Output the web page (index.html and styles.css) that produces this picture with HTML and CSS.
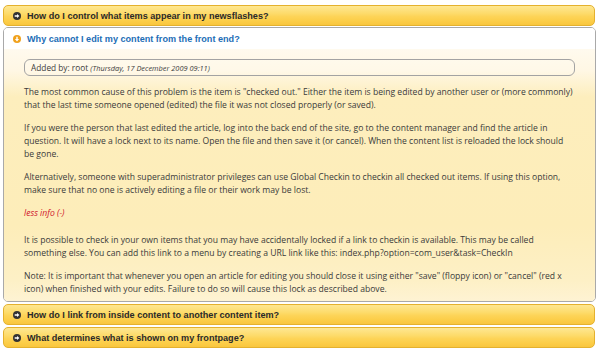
FILE: index.html
```html
<!DOCTYPE html>
<html>
<head>
<meta charset="utf-8">
<link rel="stylesheet" href="styles.css">
</head>
<body>
<div class="faq">
  <div class="bar">
    <svg class="ico" viewBox="0 0 8 8"><circle cx="4" cy="4" r="4" fill="#333"/><path d="M1.7 3.3H4V1.9L6.4 4 4 6.1V4.7H1.7Z" fill="#fff"/></svg>
    <span>How do I control what items appear in my newsflashes?</span>
  </div>
  <div class="panel">
    <div class="head">
      <svg class="ico" viewBox="0 0 8 8"><circle cx="4" cy="4" r="4" fill="#f0a11c"/><path d="M3.3 1.7H4.7V4H6.1L4 6.4 1.9 4H3.3Z" fill="#fff"/></svg>
      <span>Why cannot I edit my content from the front end?</span>
    </div>
    <div class="body">
      <div class="meta">Added by: root <em>(Thursday, 17 December 2009 09:11)</em></div>
      <p>The most common cause of this problem is the item is "checked out." Either the item is being edited by another user or (more commonly)<br>that the last time someone opened (edited) the file it was not closed properly (or saved).</p>
      <p>If you were the person that last edited the article, log into the back end of the site, go to the content manager and find the article in<br>question. It will have a lock next to its name. Open the file and then save it (or cancel). When the content list is reloaded the lock should<br>be gone.</p>
      <p>Alternatively, someone with superadministrator privileges can use Global Checkin to checkin all checked out items. If using this option,<br>make sure that no one is actively editing a file or their work may be lost.</p>
      <p class="less">less info (-)</p>
      <p>It is possible to check in your own items that you may have accidentally locked if a link to checkin is available. This may be called<br>something else. You can add this link to a menu by creating a URL link like this: index.php?option=com_user&amp;task=CheckIn</p>
      <p>Note: It is important that whenever you open an article for editing you should close it using either "save" (floppy icon) or "cancel" (red x<br>icon) when finished with your edits. Failure to do so will cause this lock as described above.</p>
    </div>
  </div>
  <div class="bar">
    <svg class="ico" viewBox="0 0 8 8"><circle cx="4" cy="4" r="4" fill="#333"/><path d="M1.7 3.3H4V1.9L6.4 4 4 6.1V4.7H1.7Z" fill="#fff"/></svg>
    <span>How do I link from inside content to another content item?</span>
  </div>
  <div class="bar">
    <svg class="ico" viewBox="0 0 8 8"><circle cx="4" cy="4" r="4" fill="#333"/><path d="M1.7 3.3H4V1.9L6.4 4 4 6.1V4.7H1.7Z" fill="#fff"/></svg>
    <span>What determines what is shown on my frontpage?</span>
  </div>
</div>
</body>
</html>
```
FILE: styles.css
```css
html, body {
  margin: 0;
  padding: 0;
  background: #fff;
}
.faq {
  display: flex;
  flex-direction: column;
  gap: 2px;
  width: 593px;
  margin: 5px 0 0 3px;
}
.bar, .head {
  display: flex;
  align-items: center;
  gap: 6px;
  padding-left: 6px;
  font-family: "Liberation Sans", Arial, sans-serif;
  font-weight: bold;
  font-size: 9.1px;
}
.bar {
  box-sizing: border-box;
  height: 21px;
  width: 592px;
  border: 1px solid #e4b12e;
  border-radius: 5px;
  color: #2a2a2a;
  background: linear-gradient(to bottom, #fee792 0%, #fddb6a 40%, #fdd458 55%, #fccd47 80%, #f9c63e 100%);
}
.ico {
  width: 8px;
  height: 8px;
  flex: none;
  margin-left: 3px;
}
.panel {
  margin-top: -1px;
  border: 1px solid #a9a9a9;
  border-radius: 5px;
  overflow: hidden;
  background: #fff;
}
.head {
  height: 21px;
  color: #1c6db6;
  background: #fff;
}
.body {
  padding: 10px 20px 5px 20px;
  background: linear-gradient(to bottom, #fffaee 0px, #fff7e4 22px, #fdeebd 48px, #fdedb9 70%, #fdf0c6 92%, #fef3d3 100%);
  font-family: "Open Sans", "Liberation Sans", sans-serif;
  font-size: 8.6px;
  line-height: 13px;
  color: #3a3a3a;
}
.meta {
  box-sizing: border-box;
  height: 17px;
  line-height: 15px;
  border: 1px solid #a3a3a3;
  border-radius: 6px;
  padding-left: 6px;
  margin-bottom: 10px;
  font-size: 8.3px;
  color: #3c3c3c;
  background: rgba(255, 255, 255, 0.15);
}
.meta em {
  font-size: 7.4px;
  color: #3c3c3c;
}
.body p {
  margin: 0 0 10px;
  white-space: nowrap;
}
.body p:last-child {
  margin-bottom: 0;
}
.body p.less {
  color: #d0142c;
  font-style: italic;
  margin-bottom: 14px;
}
```
